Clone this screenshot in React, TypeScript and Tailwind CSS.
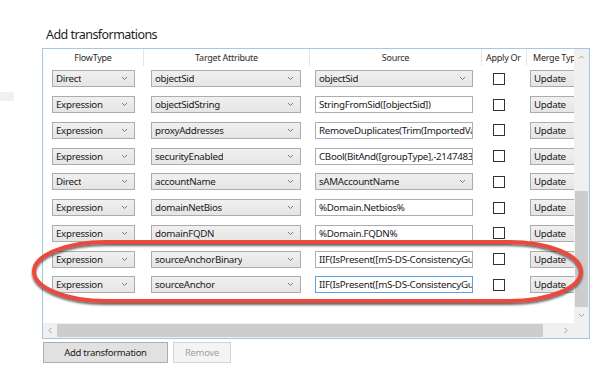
import React from 'react';

type Row = {
  flow: string;
  target: string;
  source: string;
  sourceIsList?: boolean;
  focused?: boolean;
};

const rows: Row[] = [
  { flow: 'Direct', target: 'objectSid', source: 'objectSid', sourceIsList: true },
  { flow: 'Expression', target: 'objectSidString', source: 'StringFromSid([objectSid])' },
  { flow: 'Expression', target: 'proxyAddresses', source: 'RemoveDuplicates(Trim(ImportedValue("proxyAddresses")))' },
  { flow: 'Expression', target: 'securityEnabled', source: 'CBool(BitAnd([groupType],-2147483648))' },
  { flow: 'Direct', target: 'accountName', source: 'sAMAccountName', sourceIsList: true },
  { flow: 'Expression', target: 'domainNetBios', source: '%Domain.Netbios%' },
  { flow: 'Expression', target: 'domainFQDN', source: '%Domain.FQDN%' },
  { flow: 'Expression', target: 'sourceAnchorBinary', source: 'IIF(IsPresent([mS-DS-ConsistencyGuid]),[mS-DS-ConsistencyGuid],[objectGUID])' },
  { flow: 'Expression', target: 'sourceAnchor', source: 'IIF(IsPresent([mS-DS-ConsistencyGuid]),ConvertToBase64([mS-DS-ConsistencyGuid]),ConvertToBase64([objectGUID]))', focused: true },
];

const Chevron = ({ dir = 'down', color = '#7a7a7a' }: { dir?: 'down' | 'up' | 'left' | 'right'; color?: string }) => {
  const d = {
    down: 'M1 2 L3.5 4.5 L6 2',
    up: 'M1 4.5 L3.5 2 L6 4.5',
    left: 'M4.5 1 L2 3.5 L4.5 6',
    right: 'M2.5 1 L5 3.5 L2.5 6',
  }[dir];
  return (
    <svg width="7" height="7" viewBox="0 0 7 7" className="shrink-0">
      <path d={d} fill="none" stroke={color} strokeWidth="1" />
    </svg>
  );
};

const Combo = ({ value, width }: { value: string; width: string }) => (
  <div
    className={`${width} h-[17px] flex items-center justify-between border border-[#acacac] bg-gradient-to-b from-[#f0f0f0] to-[#e5e5e5] pl-[3px] pr-[6px]`}
  >
    <span className="truncate leading-[15px]">{value}</span>
    <Chevron />
  </div>
);

const TextBox = ({ value, focused }: { value: string; focused?: boolean }) => (
  <div
    className={`w-[158px] h-[17px] flex items-center overflow-hidden whitespace-nowrap bg-white pl-[3px] border ${
      focused ? 'border-[#5a9fe0]' : 'border-[#abadb3]'
    }`}
  >
    <span className="leading-[15px]">{value}</span>
  </div>
);

export default function App() {
  return (
    <div
      className="w-[615px] h-[385px] bg-white flex relative overflow-hidden text-[#1b1b1b]"
      style={{ fontFamily: '"Noto Sans", "Open Sans", sans-serif' }}
    >
      {/* Edge of the neighbouring panel */}
      <div className="w-[42px] shrink-0">
        <div className="mt-[92px] w-[14px] h-[9px] bg-[#f1f1f1]" />
      </div>

      <div className="flex flex-col pt-[24px]">
        <h2 className="h-[24px] pl-[4px] text-[12.5px] leading-[22px] tracking-[-0.55px] text-[#1e1e1e]">
          Add transformations
        </h2>

        {/* Grid */}
        <div className="w-[548px] h-[291px] border border-[#a7c6e2] flex flex-col text-[9.75px] tracking-[-0.3px]">
          <div className="flex flex-1 min-h-0">
            <div className="w-[531px] overflow-hidden flex flex-col">
              {/* Header */}
              <div className="flex h-[17px] shrink-0 text-[9px] tracking-[-0.25px] text-[#2b2b2b]">
                <div className="w-[101px] shrink-0 border-r border-[#e6e6e6] flex items-center justify-center">FlowType</div>
                <div className="w-[166px] shrink-0 border-r border-[#e6e6e6] flex items-center justify-center">Target Attribute</div>
                <div className="w-[172px] shrink-0 border-r border-[#e6e6e6] flex items-center justify-center">Source</div>
                <div className="w-[45px] shrink-0 border-r border-[#e6e6e6] flex items-center pl-[4px] whitespace-nowrap overflow-hidden">Apply Or</div>
                <div className="w-[60px] shrink-0 flex items-center pl-[6px] whitespace-nowrap">Merge Type</div>
              </div>

              {/* Rows */}
              <div className="flex flex-col">
                {rows.map((r) => (
                  <div key={r.target} className="flex items-center h-[25.75px] shrink-0">
                    <div className="w-[101px] shrink-0 pl-[9px]">
                      <Combo value={r.flow} width="w-[83px]" />
                    </div>
                    <div className="w-[166px] shrink-0 pl-[7px]">
                      <Combo value={r.target} width="w-[150px]" />
                    </div>
                    <div className="w-[172px] shrink-0 pl-[5px]">
                      {r.sourceIsList ? (
                        <Combo value={r.source} width="w-[158px]" />
                      ) : (
                        <TextBox value={r.source} focused={r.focused} />
                      )}
                    </div>
                    <div className="w-[45px] shrink-0 pl-[11px]">
                      <div className="w-[12px] h-[12px] border border-[#333333] bg-white" />
                    </div>
                    <div className="w-[60px] shrink-0 pl-[3px]">
                      <div className="w-[60px] h-[17px] flex items-center border border-[#acacac] bg-gradient-to-b from-[#f0f0f0] to-[#e5e5e5] pl-[3px]">
                        <span className="leading-[15px]">Update</span>
                      </div>
                    </div>
                  </div>
                ))}
              </div>
            </div>

            {/* Vertical scrollbar */}
            <div className="w-[15px] shrink-0 flex flex-col bg-[#f0f0f0]">
              <div className="h-[17px] flex items-center justify-center">
                <Chevron dir="up" color="#a3a3a3" />
              </div>
              <div className="flex-1">
                <div className="mt-[126px] h-[116px] mx-px bg-[#cdcdcd]" />
              </div>
              <div className="h-[17px] flex items-center justify-center">
                <Chevron dir="down" color="#a3a3a3" />
              </div>
            </div>
          </div>

          {/* Horizontal scrollbar */}
          <div className="flex h-[15px] shrink-0">
            <div className="w-[531px] flex bg-[#f0f0f0]">
              <div className="w-[14px] flex items-center justify-center">
                <Chevron dir="left" color="#a3a3a3" />
              </div>
              <div className="flex-1 flex items-center">
                <div className="w-[486px] h-[13px] bg-[#cdcdcd]" />
              </div>
              <div className="w-[17px] flex items-center justify-center">
                <Chevron dir="right" color="#a3a3a3" />
              </div>
            </div>
            <div className="w-[15px] bg-[#f0f0f0]" />
          </div>
        </div>

        {/* Buttons */}
        <div className="flex gap-[5px] mt-[3px] pl-px text-[9.5px] tracking-[-0.3px]">
          <button className="w-[125px] h-[21px] border border-[#adadad] bg-[#e1e1e1] text-[#1b1b1b] leading-none">
            Add transformation
          </button>
          <button className="w-[58px] h-[21px] border border-[#d5d5d5] bg-[#f4f4f4] text-[#a3a3a3] leading-none">
            Remove
          </button>
        </div>
      </div>

      {/* Red callout around the last two rows */}
      <svg className="absolute left-0 top-0 pointer-events-none" width="615" height="385">
        <defs>
          <filter id="sh" x="-10%" y="-30%" width="120%" height="160%">
            <feDropShadow dx="0" dy="2" stdDeviation="1.2" floodColor="#000" floodOpacity="0.6" />
          </filter>
        </defs>
        <rect
          x="34"
          y="242"
          width="547"
          height="59"
          rx="72"
          ry="29.5"
          fill="none"
          stroke="#ea4a3c"
          strokeWidth="4"
          filter="url(#sh)"
        />
      </svg>
    </div>
  );
}
